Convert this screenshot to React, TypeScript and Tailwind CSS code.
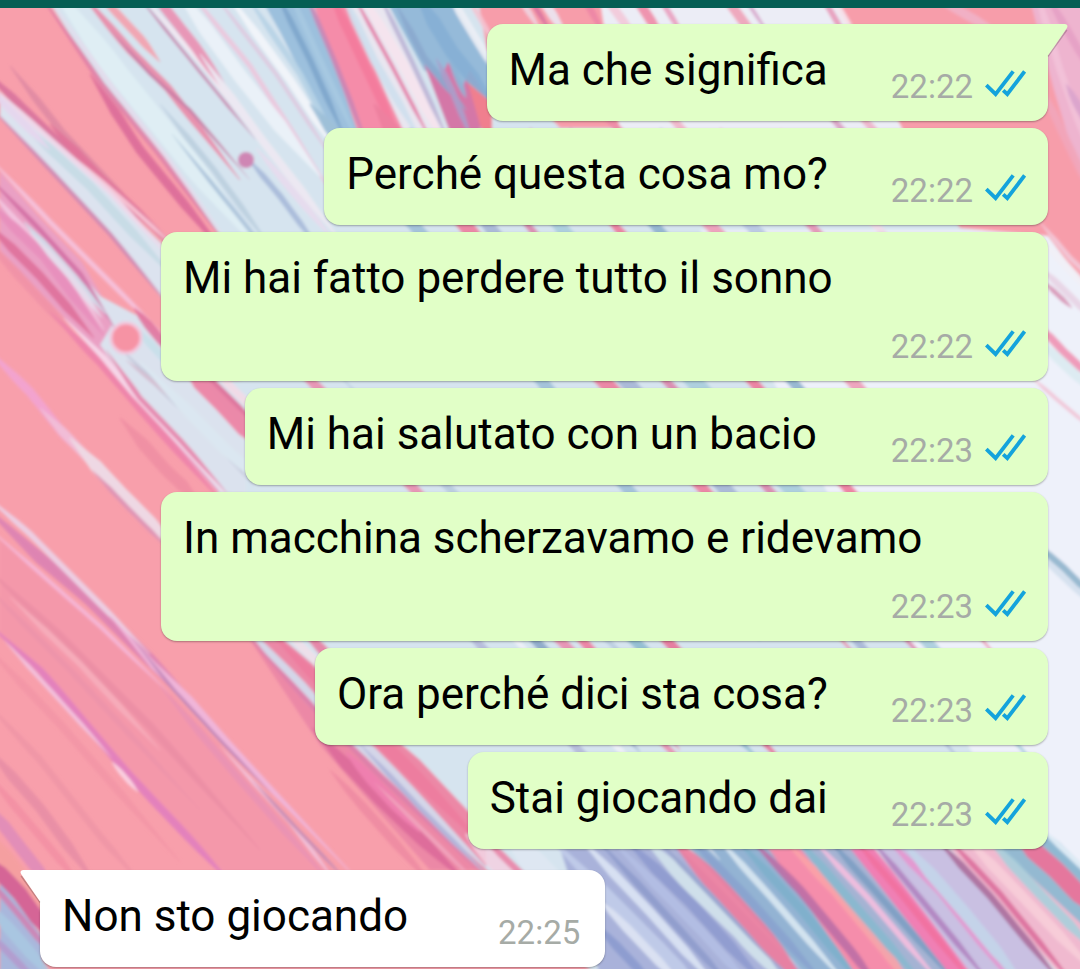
import React from 'react';
import clsx from 'clsx';

interface Message {
  text: string;
  time: string;
  mine: boolean;
  tail?: boolean;
  wide?: boolean;
}

const MESSAGES: Message[] = [
  { text: 'Ma che significa', time: '22:22', mine: true, tail: true },
  { text: 'Perché questa cosa mo?', time: '22:22', mine: true },
  { text: 'Mi hai fatto perdere tutto il sonno', time: '22:22', mine: true },
  { text: 'Mi hai salutato con un bacio', time: '22:23', mine: true, wide: true },
  { text: 'In macchina scherzavamo e ridevamo', time: '22:23', mine: true },
  { text: 'Ora perché dici sta cosa?', time: '22:23', mine: true },
  { text: 'Stai giocando dai', time: '22:23', mine: true },
  { text: 'Non sto giocando', time: '22:25', mine: false, tail: true },
];

// Flat areas of paint: [path, fill]
const AREAS: [string, string][] = [
  // pale middle
  ['M48 0 L105 90 L165 163 L216 230 L300 330 L240 380 L200 380 L243 432 L243 490 L217 490 L250 640 L357 745 L480 862 L600 980 L1100 980 L1100 240 L1040 225 L850 60 L700 0Z', '#d6e4ef'],
  ['M700 230 L1090 230 L1090 880 L1000 800 L860 560Z', '#eef1fa'],
  // salmon, top right
  ['M478 0 L1090 0 L1090 292 L1048 236 L960 228 L900 128 L560 128 L487 50Z', '#f79daa'],
  ['M600 0 L836 0 L904 132 L620 132Z', '#ecedf6'],
  ['M1030 0 L1090 0 L1090 200 L1072 150 L1054 90Z', '#eeb4cf'],
  // blue streams, top
  ['M262 0 L310 0 Q336 66 358 132 L326 132 Q300 64 262 0Z', '#9cc0dd'],
  ['M312 0 L346 0 Q372 66 404 132 L358 132Z', '#f58ca9'],
  ['M346 0 L386 0 Q412 62 448 132 L404 132Z', '#e9e6f0'],
  ['M386 0 L452 0 L490 62 L490 100 L440 80 L424 70Z', '#95bad9'],
  ['M424 64 L440 80 L448 62 L462 88 L470 70 L492 104 L492 132 L450 132Z', '#d477a7'],
  ['M466 76 L492 104 L492 132 L482 132Z', '#f07f8e'],
  // pale ribbon from the left edge
  ['M0 92 L33 123 L100 182 L168 250 L168 306 L110 233 L53 173 L0 117Z', '#dce3ef'],
  // lower ribbon with the bubble
  ['M0 172 L40 218 L82 262 L104 300 L142 320 L168 342 L206 386 L246 434 L246 494 L217 492 L133 397 L78 332 L0 250Z', '#eaa0c4'],
  ['M70 262 L100 296 L142 318 L168 342 L206 386 L246 434 L246 494 L220 492 L136 395 L100 345 L112 325Z', '#dbe2ee'],
  // rose field, lower left
  ['M0 540 L60 592 L150 672 L230 756 L340 880 L232 880 L130 780 L50 690 L0 636Z', '#f498aa'],
  ['M250 640 L280 640 L420 760 L486 830 L486 870 L430 870 L320 745Z', '#ec88a6'],
  // corner, lower left
  ['M0 880 L42 936 L42 975 L0 975Z', '#a9b7dc'],
  // bottom right streams
  ['M560 848 L680 848 L806 975 L600 975Z', '#a9b2da'],
  ['M690 848 L780 848 L880 975 L806 975Z', '#93b3d3'],
  ['M768 848 L800 848 Q850 900 900 975 L856 975Z', '#f58dab'],
  ['M800 848 L850 848 L960 975 L900 975Z', '#a5b3d3'],
  ['M850 848 L874 848 Q920 905 972 975 L950 975Z', '#f07fb4'],
  ['M876 848 L945 848 L1054 975 L972 975Z', '#c9c0e2'],
  ['M950 848 L1008 848 L1090 925 L1090 975 L1060 975Z', '#f0b9cf'],
  ['M1000 848 L1048 838 L1090 880 L1090 932Z', '#94b9d1'],
];

// Strands of paint: [points, colour, width]
const STRANDS: [string, string, number][] = [
  // top left, inside the pale stream
  ['30 -20 102 84 162 158 230 250', '#e07fa6', 5],
  ['90 74 140 150 230 260', '#dc6c9a', 9],
  ['40 -14 110 84 166 156 230 244', '#e6dcec', 4],
  ['40 -30 120 76 180 150 260 250', '#e0f0f5', 20],
  ['70 -20 130 50 168 88 240 180', '#e98aa8', 8],
  ['110 30 150 74 190 110 250 180', '#c6739f', 3],
  ['90 -20 112 8 140 38 160 62', '#f4a0ad', 8],
  ['130 -14 200 72 256 140', '#c886ae', 3],
  ['136 -12 208 72 262 142', '#f6e8f2', 4],
  ['146 -20 165 8 195 46 240 110', '#ea8fb1', 10],
  ['200 54 262 140 340 240', '#efe9f3', 8],
  ['180 -20 250 66 340 206', '#edc7dd', 5],
  ['170 -20 240 76 320 176', '#edf3f9', 14],
  ['206 -16 276 74 340 170', '#dfc9df', 4],
  ['220 -16 290 80 340 156', '#f4f6fb', 8],
  ['240 -14 300 74 338 146', '#b7d3e6', 6],
  ['160 104 214 170 270 246', '#bccfdf', 6],
  ['172 134 248 228 270 256', '#aac2d9', 4],
  ['246 156 280 196 320 250', '#a7b9d9', 6],
  ['256 148 332 238', '#e8dcee', 7],
  // blue stream details
  ['270 -20 310 60 346 140', '#7fa6cc', 6],
  ['284 -20 320 60 360 146', '#a8c9e2', 6],
  ['300 -20 334 60 368 146', '#c985b5', 5],
  ['324 -20 362 60 404 148', '#f47b9c', 9],
  ['336 -20 374 60 424 146', '#cfe0ee', 8],
  ['346 -18 392 66 436 150', '#e47fa9', 4],
  ['354 -18 404 66 448 150', '#f7e4ee', 10],
  ['374 -16 412 62 452 148', '#bcb5d6', 5],
  ['396 4 424 58 466 110', '#8aa9cf', 7],
  ['414 -10 452 52 494 104', '#86b0d5', 14],
  ['436 58 452 90 472 140', '#a9a0cc', 6],
  ['450 60 466 98', '#8fb5d6', 6],
  ['444 -14 474 36 500 78', '#eef0f6', 8],
  ['464 -10 496 46', '#f4c4d2', 5],
  // behind the first bubble
  ['506 -24 540 30', '#f0d5e2', 6],
  ['516 -24 552 34', '#d9749f', 5],
  ['528 -24 566 36', '#ebe8f3', 9],
  ['572 -24 604 34', '#ee86a6', 7],
  ['590 -24 640 44', '#f3c9da', 9],
  ['622 -24 666 44', '#f08ba8', 10],
  ['646 -24 686 40', '#e9a0c0', 6],
  ['710 -24 764 50', '#efa2b9', 10],
  ['730 -24 770 36', '#d8a8cc', 4],
  ['810 -24 850 44', '#e79bbb', 6],
  ['820 -24 860 44', '#f6e3ec', 6],
  ['596 104 636 150', '#ef8ca8', 8],
  ['660 104 700 150', '#f2b4c8', 8],
  ['820 104 860 150', '#dba0c4', 6],
  ['850 104 892 150', '#efb3c9', 7],
  ['930 -6 1000 34', '#f1b3c9', 9],
  // right edge
  ['1030 -30 1060 70 1096 170', '#f3c3d9', 7],
  ['1044 -10 1096 80', '#e6a1c6', 8],
  ['1066 84 1096 138', '#dba4cd', 8],
  ['1040 84 1066 140 1096 202', '#f2a6bb', 8],
  ['1040 222 1070 258 1096 282', '#f3cad9', 5],
  ['1040 238 1096 298', '#f2f0f7', 8],
  ['1040 267 1066 292 1096 322', '#e8d4e4', 7],
  ['1044 282 1072 308', '#d895b6', 5],
  ['1036 322 1064 352 1096 382', '#f092b4', 8],
  ['1036 338 1096 394', '#dcebf2', 10],
  ['1030 376 1060 402 1096 432', '#f2c4d6', 4],
  ['1034 542 1064 568 1096 600', '#8fb3cc', 7],
  ['1034 550 1096 608', '#d4e0ee', 6],
  // left ribbons
  ['10 66 62 132 176 254', '#e08aa4', 7],
  ['-20 66 44 128 110 190', '#d9739d', 8],
  ['50 124 100 178 176 248', '#de7098', 9],
  ['78 160 130 206 176 248', '#f7c6d6', 4],
  ['-20 76 40 130 110 192 176 264', '#f0d8ea', 5],
  ['10 112 90 186 176 280', '#c6dce6', 9],
  ['-16 84 50 150', '#e7d6ee', 7],
  ['-16 100 54 174 110 234 176 314', '#cf87b2', 4],
  ['-16 152 50 222 110 282 176 348', '#f6c4de', 5],
  ['-16 172 40 230 80 274 116 330', '#d36fa4', 5],
  ['-16 184 30 236 70 276 104 330', '#f4c9e2', 6],
  ['-16 198 44 256 104 336', '#e88fbd', 10],
  ['24 222 60 262 106 314', '#cfe0ec', 7],
  ['30 232 70 276 102 318', '#e5e2f0', 6],
  ['-16 220 40 276 94 338', '#e0709b', 9],
  ['-16 238 80 342', '#f193a8', 9],
  ['134 308 176 358', '#e2759f', 9],
  ['134 326 180 376', '#c8e0ea', 8],
  // lower ribbon
  ['50 312 100 362 150 420 224 504', '#ee82ab', 8],
  ['64 318 104 358 134 394 168 430 232 502', '#f8dced', 6],
  ['106 350 140 398 180 440 226 492', '#e783ab', 5],
  ['120 348 160 388 212 438 254 486', '#c3c6d8', 5],
  ['126 360 190 412', '#d4bcd0', 4],
  ['140 362 226 450 260 480', '#dbe8f2', 11],
  ['180 360 222 402 270 454', '#ee80a2', 19],
  ['194 362 262 430', '#e06b96', 5],
  ['210 366 262 418', '#f3dbe7', 8],
  ['120 418 166 470 200 502', '#f08fa4', 12],
  // single strands over the salmon field
  ['-16 346 30 392 62 432 90 462', '#f2a5d3', 9],
  ['40 408 84 454 122 494', '#f1c0dc', 9],
  ['70 438 122 494 180 552', '#eedfea', 13],
  ['92 470 128 508 174 554', '#dc93b6', 4],
  ['-20 502 40 558 90 600 150 660 240 754', '#dc82b4', 12],
  ['-16 494 30 534 90 594 150 654', '#ecd3e8', 6],
  ['-16 524 50 582 100 626 170 694', '#f6b9da', 4],
  ['110 616 154 666 190 700 232 748 354 876', '#f0b8de', 7],
  ['130 636 174 690 220 740 272 794', '#bd86bd', 3],
  ['220 746 290 822 336 882', '#f2c5dd', 4],
  ['252 780 300 832 348 882', '#c18ab6', 3],
  ['160 686 240 780 330 882', '#e993b4', 7],
  ['-16 566 60 636 150 726 260 850', '#ec8fa5', 8],
  ['10 597 80 664 160 750', '#f7afbc', 6],
  ['-16 584 70 670 200 810', '#ee94aa', 6],
  ['-16 620 40 670 84 722 130 776 200 850 232 884', '#e27fbf', 8],
  ['4 640 52 692 112 758', '#f3c5e2', 4],
  ['112 762 138 792', '#fbd5e6', 5],
  ['-16 644 60 724 180 862', '#f396a7', 8],
  ['-16 700 40 760 100 836 140 882', '#f096a7', 7],
  ['-16 744 40 808 96 884', '#e88ea6', 10],
  ['-16 770 40 836 80 884', '#f391a5', 8],
  ['-16 800 24 852 54 890', '#e08cba', 12],
  ['-16 830 46 910', '#f5a0a0', 16],
  ['-20 852 20 894 54 942', '#d25f94', 15],
  ['-16 874 20 916 54 958', '#cf84b4', 6],
  ['-16 900 54 980', '#a9c8e2', 12],
  ['-16 928 40 985', '#b49bce', 7],
  // stream beside the sixth and seventh bubbles
  ['240 620 312 700 370 752 490 872', '#d2dff0', 13],
  ['240 628 314 708 370 766 486 878', '#dd80ab', 5],
  ['262 622 330 690 400 760 490 852', '#ee7c9f', 13],
  ['276 622 350 694', '#f0e0ea', 8],
  ['296 622 370 700', '#e87fa2', 10],
  ['360 744 420 808 488 876', '#aebbe0', 5],
  ['312 728 380 800 466 882', '#dd6b9a', 12],
  ['346 752 420 832', '#f07fb0', 11],
  ['330 770 430 882', '#ef8ba2', 9],
  ['374 782 480 886', '#f2a6bf', 4],
  // strands that show between the bubbles
  ['260 330 330 400 500 580 780 860', '#e98fb0', 10],
  ['340 376 480 520 660 690', '#b9cbdf', 8],
  ['310 104 330 128 470 290 620 480 760 640', '#9fc0d8', 12],
  ['374 104 390 128 500 270 640 420 860 660', '#ee7f9f', 15],
  ['410 128 540 290 700 460 960 760', '#a7b6d6', 14],
  ['450 128 580 290 760 480 980 720', '#dc86ac', 8],
  ['480 128 620 300 820 520 1040 770', '#a9cddd', 16],
  ['530 128 680 300 840 480 1000 660', '#ee7a9b', 10],
  ['570 128 720 300 880 480', '#8fb2ce', 10],
  ['620 128 780 300 940 480', '#ef9db8', 12],
  ['660 128 830 310', '#b8c7e2', 12],
  ['720 128 890 310', '#e593b4', 8],
  ['780 128 900 250', '#f2dbe8', 10],
  ['400 560 560 730 690 870', '#b4b9da', 8],
  ['440 560 620 750 720 860', '#f0f2f8', 6],
  ['460 560 640 752', '#8aa7c8', 9],
  ['520 570 680 750', '#ef7d9f', 9],
  ['560 570 760 760', '#8fbcd0', 10],
  ['600 570 790 770', '#e87599', 10],
  // bottom
  ['466 834 540 906', '#f2d2e2', 16],
  ['480 834 540 892', '#ea84a8', 7],
  ['506 834 580 910', '#dfe8f3', 24],
  ['546 834 660 948 700 990', '#c2cdea', 12],
  ['576 834 650 912 720 990', '#dde6f5', 9],
  ['594 836 680 930 734 990', '#8f9ccc', 7],
  ['608 836 700 930 754 990', '#b4bfe4', 9],
  ['622 836 690 902 770 990', '#8f9bd0', 11],
  ['596 896 690 994', '#e0e7f5', 9],
  ['596 924 656 988', '#8c9bcf', 9],
  ['640 834 694 888 740 932 790 990', '#d4e4ec', 15],
  ['654 836 708 892 800 988', '#9aa6cf', 5],
  ['666 832 720 888 758 930 812 994', '#ee7c9e', 18],
  ['686 834 746 896 828 988', '#8aa3cf', 9],
  ['714 834 770 896 850 988', '#dbe9f3', 7],
  ['734 836 800 908 866 990', '#7fb0cc', 9],
  ['746 834 800 890 850 950 882 992', '#bd6fa6', 9],
  ['780 836 834 890 884 950 916 992', '#fba3a8', 9],
  ['794 834 850 900 930 992', '#89b9cf', 9],
  ['810 836 868 898 948 992', '#f6bfe0', 6],
  ['826 836 876 892 960 988', '#7e9fc4', 7],
  ['852 836 900 892 980 992', '#f2719f', 7],
  ['868 836 920 898 994 988', '#b183c0', 6],
  ['882 834 940 892 1020 992', '#e695cf', 7],
  ['896 834 964 912 1028 990', '#c4d6ea', 12],
  ['932 834 990 896 1066 988', '#ab6b9b', 7],
  ['944 834 1000 894 1080 992', '#dd6f9d', 6],
  ['962 834 1020 894 1100 978', '#f8cfda', 10],
  ['984 834 1040 894 1100 956', '#a8d0dc', 10],
  ['1010 830 1056 870 1104 920', '#ee7098', 18],
  ['1034 826 1100 890', '#8fb8d3', 12],
  ['1038 826 1100 884', '#dbeaf4', 5],
];

// Turns a polyline into a ribbon that thins out towards both ends.
function ribbon(points: string, width: number) {
  const n = points.split(' ').map(Number);
  const knots: [number, number][] = [];
  for (let i = 0; i < n.length; i += 2) knots.push([n[i], n[i + 1]]);

  const line: [number, number][] = [];
  knots.slice(1).forEach(([x, y], i) => {
    const [px, py] = knots[i];
    for (let s = 0; s < 6; s++) line.push([px + ((x - px) * s) / 6, py + ((y - py) * s) / 6]);
  });
  line.push(knots[knots.length - 1]);

  const last = line.length - 1;
  const left: string[] = [];
  const right: string[] = [];
  line.forEach(([x, y], i) => {
    const [ax, ay] = line[Math.max(0, i - 1)];
    const [bx, by] = line[Math.min(last, i + 1)];
    const len = Math.hypot(bx - ax, by - ay) || 1;
    const edge = Math.min(1, (Math.min(i, last - i) / last) * 4);
    const half = (width / 2) * (0.1 + 0.9 * edge);
    const ox = (-(by - ay) / len) * half;
    const oy = ((bx - ax) / len) * half;
    left.push(`${(x + ox).toFixed(1)},${(y + oy).toFixed(1)}`);
    right.unshift(`${(x - ox).toFixed(1)},${(y - oy).toFixed(1)}`);
  });
  return [...left, ...right].join(' ');
}

function Wallpaper() {
  return (
    <svg
      className="absolute inset-0 h-full w-full"
      viewBox="0 0 1080 969"
      preserveAspectRatio="xMidYMid slice"
      aria-hidden="true"
    >
      <defs>
        <filter id="soft" x="0" y="0" width="100%" height="100%">
          <feGaussianBlur stdDeviation="1.6" />
        </filter>
      </defs>
      <rect width="1080" height="969" fill="#f89fab" />
      <g filter="url(#soft)">
        {AREAS.map(([d, fill]) => <path key={d} d={d} fill={fill} />)}
        <g opacity="0.9">
          {STRANDS.map(([points, fill, width]) => (
            <polygon key={points} points={ribbon(points, width)} fill={fill} />
          ))}
        </g>
        <circle cx="246" cy="160" r="8" fill="#cf86b4" />
        <circle cx="126" cy="338" r="15" fill="#f693a4" stroke="#f3c6dc" strokeWidth="3" />
      </g>
    </svg>
  );
}

function ReadTicks() {
  return (
    <svg className="mb-[9px] h-[27px] w-[41px]" viewBox="0 0 41 27" fill="none" role="img" aria-label="Letto">
      <g stroke="#14a3dc" strokeWidth="3.8">
        <path d="M1.3 15.2 L10.6 24.2 L28.2 1.4" />
        <path d="M18.2 20.4 L22.3 24.2 L39.6 1.4" />
      </g>
    </svg>
  );
}

function Tail({ mine }: { mine: boolean }) {
  return (
    <svg
      className={clsx('absolute top-0 h-[34px] w-[22px]', mine ? '-right-5' : '-left-5 -scale-x-100')}
      viewBox="0 0 22 34"
      aria-hidden="true"
    >
      <path d="M2 32.4 L20.8 6" stroke="#000000" strokeOpacity="0.2" strokeWidth="1.5" />
      <path d="M0 0 H19 Q23 0.6 20.6 4.6 L2 31.4 H0Z" fill={mine ? '#e1ffc7' : '#ffffff'} />
    </svg>
  );
}

function Bubble({ message }: { message: Message }) {
  const { text, time, mine, tail, wide } = message;

  return (
    <li
      className={clsx(
        'relative flex max-w-[88%] flex-wrap items-end rounded-2xl pt-5 pb-[15px] pl-[22px] shadow-[0_1px_2px_rgba(0,0,0,0.3)]',
        mine ? 'self-end bg-[#e1ffc7] pr-[22px]' : 'mt-[14px] self-start bg-white pr-[25px]',
        mine && (wide ? 'gap-x-[74px]' : 'gap-x-[63px]'),
        !mine && 'gap-x-[90px]',
        tail && mine && 'rounded-tr-none',
        tail && !mine && 'rounded-tl-none'
      )}
    >
      {tail && <Tail mine={mine} />}
      <p className="pb-[10px] text-[44px] leading-[52px] text-black">{text}</p>
      <div className="ml-auto flex h-[52px] items-end gap-3">
        <time className="text-[33px] leading-[39px] text-[#a6aba6]">{time}</time>
        {mine && <ReadTicks />}
      </div>
    </li>
  );
}

export default function App() {
  return (
    <div className="relative flex min-h-screen flex-col overflow-hidden font-[Roboto,sans-serif]">
      <Wallpaper />
      <header className="relative h-2 bg-[#055e54]" />
      <main className="relative flex-1">
        <ul className="flex flex-col gap-[7px] pt-4 pr-8 pl-10">
          {MESSAGES.map((message) => <Bubble key={message.text} message={message} />)}
        </ul>
      </main>
    </div>
  );
}
